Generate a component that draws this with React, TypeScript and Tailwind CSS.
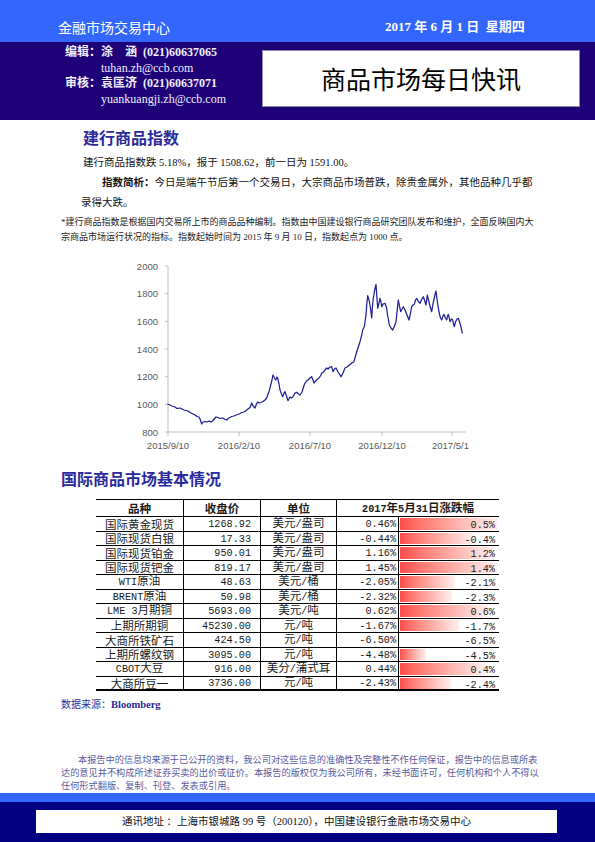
import React from 'react';

const serif = "font-['Liberation_Serif','Noto_Sans_CJK_SC',serif]";
const sans = "font-['Noto_Sans_CJK_SC',sans-serif]";

// 建行商品指数走势 (页面坐标)
const pts = `167.5,404 170,405 172,406 175,407 177,408.5 180,408 182,409 184,410 186,410.5 188,411 190,412.5 193,414 195,415 197,416.5 199,417 200,419 201.7,424 203,422 205,421.5 207,422 209,421 211,422 213,420.5 215,418 216,417 218,417.5 220,418.5 222,418 223,418 225,419.5 226.7,420 228,418.5 230,417.5 231.7,416.5 234,416 236,415 238,414.5 240,413.5 241.7,412.5 244,412 246,410.5 248,409 250,407.5 251.7,403 253,406 255,408 256.5,404 257.7,402 259,403 261,402.5 263,401.5 265,400 266.7,398 268,394 269,391.7 270.5,386 272,380 273,375 274.5,378 275.7,380 277,377 277.7,378 279,384 280,390 281.5,394 282.7,396.7 284,393 285,391.7 286.5,396 288,400.7 290,397 291.5,398 293,396.7 295,393 296.7,392.3 298,393.5 300,395 302,392 303.5,387 305,383 306.5,381 308,380 310,378 311.7,376.7 313,380 314,383 315.5,381 317,379.5 319,378 321,375 321.7,373 323.5,372 325,370 326.7,368 328,369 330,367 331.7,366.7 333,371.7 334.5,369 336,368 338,372 340,375 341,376.7 343,373 345,368 347,367 349.5,365 351.7,363 354,361.7 355.5,356 356.7,351.7 358.3,347 360,341.7 361.5,336 362.7,330 364.3,326.7 365,322 366,315 366.8,304 367.7,295.7 369,300 370,305 371,312 371.7,318 372.5,306 373.3,298.3 374.7,290 376,284.3 376.8,296 377.7,308.3 379,303 380,298.3 381,302 381.7,306.7 383,304 385,303.3 386,306 386.7,308.3 387.5,315 388.5,320 389.3,325 391,328 392.7,330 394.5,326 396,321.7 397,312 398.3,300 399.5,306 400.7,311.7 402,309 403.3,306.7 405,310 407,315 409,320 410.5,313 411.7,306.7 413,305 414.3,304.3 415.5,300 416.7,298.3 418,301 420,303.3 421.5,300 423.3,296.7 424.5,300 426,305 427.3,295 428.5,300 430,306 431.7,311.7 433,304 434.5,297 436,291 437.5,303 439.3,313.3 440.5,318 441.7,320 443,316 444,314.3 445.5,318 446.7,320 447.5,316 448.3,314.3 449.3,318 450,321.7 451.5,319 452.7,320 453.5,324 454.3,326.7 455.5,322 457,319 458.3,318.3 459.2,321 460,323.3 461.2,328 462.3,333.3`;

const yTicks = [2000, 1800, 1600, 1400, 1200, 1000, 800];
const xTicks = [
  { x: 168, label: '2015/9/10', anchor: 'middle' },
  { x: 239, label: '2016/2/10', anchor: 'middle' },
  { x: 310, label: '2016/7/10', anchor: 'middle' },
  { x: 382, label: '2016/12/10', anchor: 'middle' },
  { x: 452, label: '2017/5/1', anchor: 'start' },
];
const yOf = (v: number) => 432 - (v - 800) * (166 / 1200);

const rows: [string, string, string, string, string, number][] = [
  ['国际黄金现货', '1268.92', '美元/盎司', '0.46%', '0.5%', 97],
  ['国际现货白银', '17.33', '美元/盎司', '-0.44%', '-0.4%', 73],
  ['国际现货铂金', '950.01', '美元/盎司', '1.16%', '1.2%', 94],
  ['国际现货钯金', '819.17', '美元/盎司', '1.45%', '1.4%', 97],
  ['WTI原油', '48.63', '美元/桶', '-2.05%', '-2.1%', 55],
  ['BRENT原油', '50.98', '美元/桶', '-2.32%', '-2.3%', 52],
  ['LME 3月期铜', '5693.00', '美元/吨', '0.62%', '0.6%', 88],
  ['上期所期铜', '45230.00', '元/吨', '-1.67%', '-1.7%', 59],
  ['大商所铁矿石', '424.50', '元/吨', '-6.50%', '-6.5%', 0],
  ['上期所螺纹钢', '3095.00', '元/吨', '-4.48%', '-4.5%', 26],
  ['CBOT大豆', '916.00', '美分/蒲式耳', '0.44%', '0.4%', 86],
  ['大商所豆一', '3736.00', '元/吨', '-2.43%', '-2.4%', 51],
];

// ASCII 部分用等宽窄字体, 包在同一行内保持基线一致
const Mix = ({ t }: { t: string }) => (
  <span className="leading-[12px]">
    {t.split(/([\x20-\x7e]+)/).filter(Boolean).map((s, i) =>
      /^[\x20-\x7e]+$/.test(s) ? (
        <span key={i} className="font-['Liberation_Mono',monospace] text-[10.2px]">{s}</span>
      ) : (
        <span key={i}>{s}</span>
      )
    )}
  </span>
);

const Chart = () => (
  <svg width={350} height={210} viewBox="120 250 350 210" className="ml-[120px] mt-[5.5px] block">
    <line x1={168} y1={266} x2={168} y2={432} stroke="#bfbfbf" strokeWidth={1} />
    <line x1={168} y1={432} x2={466} y2={432} stroke="#bfbfbf" strokeWidth={1} />
    {yTicks.map((v) => (
      <g key={v}>
        <line x1={165} y1={yOf(v)} x2={168} y2={yOf(v)} stroke="#bfbfbf" />
        <text x={158} y={yOf(v) + 3.5} textAnchor="end" fontSize={9.5} fill="#595959" fontFamily="Liberation Sans, sans-serif">
          {v}
        </text>
      </g>
    ))}
    {xTicks.map((t, i) => (
      <g key={t.label}>
        <line x1={t.x} y1={432} x2={t.x} y2={436} stroke="#bfbfbf" />
        <text
          x={i === 4 ? 432 : t.x}
          y={448.5}
          textAnchor={t.anchor as 'middle' | 'start'}
          fontSize={9.5}
          fill="#595959"
          fontFamily="Liberation Sans, sans-serif"
        >
          {t.label}
        </text>
      </g>
    ))}
    <polyline points={pts} fill="none" stroke="#1f1f96" strokeWidth={1.25} strokeLinejoin="round" />
  </svg>
);

const cell = 'h-[14.5px] flex items-center border-black whitespace-nowrap';

const PriceTable = () => (
  <div className={`ml-[96px] mt-[11px] w-[403px] grid grid-cols-[88px_77px_76px_62px_100px] text-[11.5px] text-[#1a1a1a] ${sans}`}>
    <div className="h-[18px] flex items-center justify-center border-t-[1.5px] border-b border-r border-black font-bold leading-[14px]">品种</div>
    <div className="h-[18px] flex items-center justify-center border-t-[1.5px] border-b border-r border-black font-bold leading-[14px]">收盘价</div>
    <div className="h-[18px] flex items-center justify-center border-t-[1.5px] border-b border-r border-black font-bold leading-[14px]">单位</div>
    <div className="col-span-2 h-[18px] flex items-center justify-center border-t-[1.5px] border-b border-black font-bold leading-[14px]">
      <Mix t="2017年5月31日涨跌幅" />
    </div>
    {rows.map((r, i) => {
      const b = i === rows.length - 1 ? 'border-b-2' : 'border-b';
      return (
        <React.Fragment key={r[0]}>
          <div className={`${cell} ${b} border-r justify-center`}><Mix t={r[0]} /></div>
          <div className={`${cell} ${b} border-r justify-end pr-[9px]`}><Mix t={r[1]} /></div>
          <div className={`${cell} ${b} border-r justify-center`}><Mix t={r[2]} /></div>
          <div className={`${cell} ${b} border-r justify-end pr-[2px]`}><Mix t={r[3]} /></div>
          <div className={`grid h-[14.5px] ${b} border-black`}>
            <div
              className="col-start-1 row-start-1 ml-[1px] mt-[1px] h-[11.5px] bg-linear-to-r from-[#ff4b4b] to-[#fff0f0]"
              style={{ width: r[5] }}
            />
            <div className="col-start-1 row-start-1 flex items-center justify-end pr-[4px]"><Mix t={r[4]} /></div>
          </div>
        </React.Fragment>
      );
    })}
  </div>
);

export default function App() {
  return (
    <div className="w-[595px] h-[842px] overflow-hidden bg-white flex flex-col">
      {/* Header */}
      <div className="h-[42px] shrink-0 bg-[#3366ff] flex items-start pt-[17px] text-white">
        <div className={`w-[385px] pl-[58px] text-[14px] leading-[20px] ${sans}`}>金融市场交易中心</div>
        <div className={`${serif} text-[13px] leading-[20px] font-bold whitespace-pre`}>2017 年 6 月 1 日  星期四</div>
      </div>
      <div className="h-[78px] shrink-0 bg-[#1e0078] flex">
        <div className={`w-[262px] pl-[65px] pt-[3px] text-[12px] leading-[15.5px] text-[#f0f0ff] ${serif}`}>
          <div className="flex font-bold whitespace-nowrap">
            <span className="w-[36px]">编辑：</span>
            <span className="w-[36px] flex justify-between"><span>涂</span><span>涵</span></span>
            <span className="ml-[6px]">(021)60637065</span>
          </div>
          <div className="pl-[36px]">tuhan.zh@ccb.com</div>
          <div className="flex font-bold whitespace-nowrap">
            <span className="w-[36px]">审核：</span>
            <span className="w-[36px]">袁匡济</span>
            <span className="ml-[6px]">(021)60637071</span>
          </div>
          <div className="pl-[36px]">yuankuangji.zh@ccb.com</div>
        </div>
        <div className={`mt-[8px] w-[318px] h-[57px] bg-white border border-[#8a8aa8] flex items-center justify-center text-[25px] text-black ${sans}`}>
          商品市场每日快讯
        </div>
      </div>

      {/* 建行商品指数 */}
      <div className={`pl-[83px] pt-[7px] text-[16px] leading-[20px] font-bold text-[#2a2a9c] ${sans}`}>建行商品指数</div>
      <div className={`mt-[6px] text-[10.5px] leading-[20px] text-[#111] ${serif}`}>
        <p className="pl-[83px] whitespace-nowrap">建行商品指数跌 5.18%，报于 1508.62，前一日为 1591.00。</p>
        <p className="pl-[81px] whitespace-nowrap">
          <span className="pl-[21px] font-bold">指数简析：</span>今日是端午节后第一个交易日，大宗商品市场普跌，除贵金属外，其他品种几乎都
          <br />
          录得大跌。
        </p>
      </div>
      <div className={`mt-[1.5px] pl-[61px] text-[9px] leading-[15px] text-[#222] whitespace-nowrap ${serif}`}>
        *建行商品指数是根据国内交易所上市的商品品种编制。指数由中国建设银行商品研究团队发布和维护，全面反映国内大
        <br />
        宗商品市场运行状况的指标。指数起始时间为 2015 年 9 月 10 日，指数起点为 1000 点。
      </div>

      <Chart />

      {/* 国际商品市场 */}
      <div className={`mt-[8px] pl-[61px] text-[16px] leading-[20px] font-bold text-[#2a2a9c] ${sans}`}>国际商品市场基本情况</div>
      <PriceTable />
      <div className={`mt-[6px] pl-[61px] text-[10px] leading-[16px] text-[#2a2a9c] ${serif}`}>
        数据来源：<span className="font-bold text-[10.5px]">Bloomberg</span>
      </div>

      {/* 免责声明 */}
      <div className={`mt-auto pl-[61px] text-[9.2px] leading-[13px] text-[#5a5a9e] whitespace-nowrap ${serif}`}>
        <span className="pl-[17px]">本报告中的信息均来源于已公开的资料，我公司对这些信息的准确性及完整性不作任何保证，报告中的信息或所表</span>
        <br />
        达的意见并不构成所述证券买卖的出价或征价。本报告的版权仅为我公司所有，未经书面许可，任何机构和个人不得以
        <br />
        任何形式翻版、复制、刊登、发表或引用。
      </div>
      <div className="h-[9px] shrink-0 bg-[#3366ff]" />
      <div className="h-[40px] shrink-0 bg-[#000080] pt-[8px]">
        <div className={`ml-[36px] w-[521px] h-[23px] bg-white flex items-center justify-center text-[10.5px] text-[#111] ${serif}`}>
          通讯地址 ：上海市银城路 99 号（200120），中国建设银行金融市场交易中心
        </div>
      </div>
    </div>
  );
}
